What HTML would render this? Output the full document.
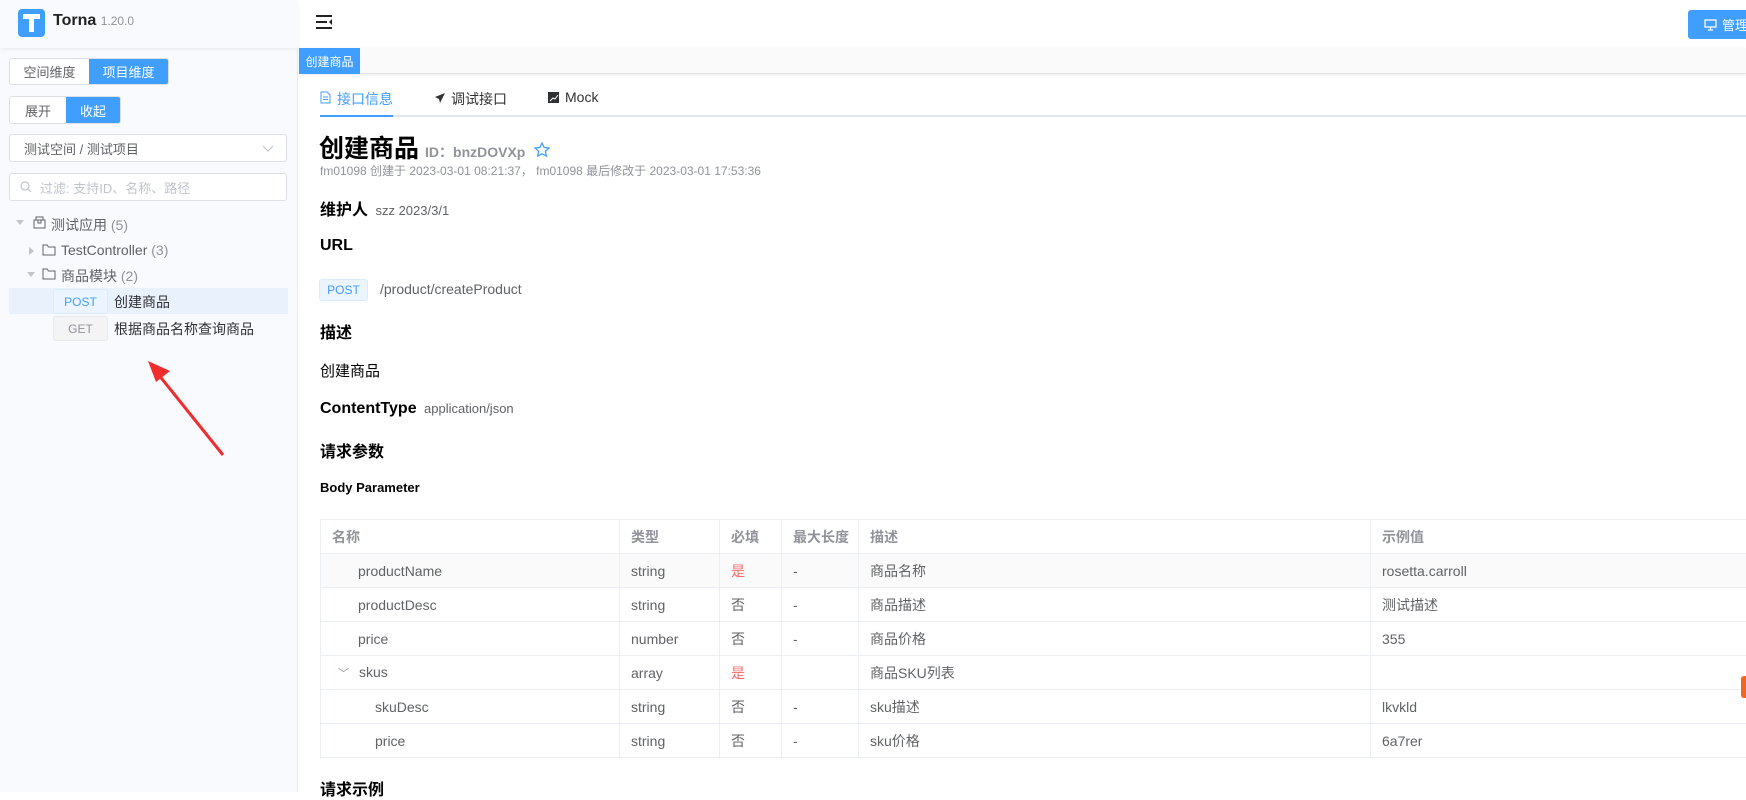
<!DOCTYPE html>
<html><head><meta charset="utf-8"><style>
*{box-sizing:border-box;margin:0;padding:0}
body{width:1746px;height:792px;overflow:hidden;position:relative;background:#fff;font-family:"Liberation Sans","Noto Sans CJK SC",sans-serif;color:#303133}
.abs{position:absolute;white-space:nowrap}
#side{position:absolute;left:0;top:0;width:298px;height:792px;background:#f8fafd;border-right:1px solid #e8ecf2}
#sidehead{position:absolute;left:0;top:0;width:298px;height:48px;background:#f8fafd;box-shadow:0 2px 4px rgba(0,0,0,.05)}
.bg{position:absolute;display:flex;border:1px solid #dcdfe6;border-radius:3px;overflow:hidden;font-size:13px;background:#fff}
.bg div{display:flex;align-items:center;justify-content:center;color:#606266}
.bg .on{background:#409eff;color:#fff}
.inp{position:absolute;left:9px;width:278px;height:28px;border:1px solid #dcdfe6;border-radius:3px;background:#fff;font-size:13px;display:flex;align-items:center}
.tr{font-size:14px;color:#606266}
.tag{position:absolute;height:25px;border-radius:3px;font-size:12px;display:flex;align-items:center;justify-content:center}
.h{font-weight:bold;font-size:16px;color:#000}
table{border-collapse:collapse;position:absolute;left:320px;top:519px;width:1440px;font-size:14px;color:#606266}
td{border:1px solid #ebeef5;height:34px;padding:0 0 0 11px}
tr.hd td{color:#909399;font-weight:bold}
tr.st td{background:#fafafa}
</style></head><body>
<div id="side"></div>
<div id="sidehead"></div>
<div class="abs" style="left:18px;top:9px;width:27px;height:28px;background:#409eff;border-radius:4px"></div>
<div class="abs" style="left:23px;top:14px;width:17px;height:5px;background:#fff"></div>
<div class="abs" style="left:29px;top:14px;width:5px;height:18px;background:#fff"></div>
<div class="abs" style="left:53px;top:12px;font-size:16px;font-weight:bold;color:#222">Torna <span style="font-size:12px;font-weight:normal;color:#909399">1.20.0</span></div>

<div class="bg" style="left:9px;top:58px;width:160px;height:27px"><div style="width:79px">空间维度</div><div class="on" style="flex:1">项目维度</div></div>
<div class="bg" style="left:9px;top:96px;width:112px;height:28px"><div style="width:56px">展开</div><div class="on" style="flex:1">收起</div></div>
<div class="inp" style="top:134px"><span style="margin-left:14px;color:#606266">测试空间 / 测试项目</span><svg style="position:absolute;right:12px;top:10px" width="12" height="8"><path d="M1 1l5 5 5-5" fill="none" stroke="#c0c4cc" stroke-width="1.2"/></svg></div>
<div class="inp" style="top:173px"><svg style="margin-left:10px" width="12" height="12"><circle cx="5" cy="5" r="4" fill="none" stroke="#c0c4cc" stroke-width="1.2"/><path d="M8 8l3 3" stroke="#c0c4cc" stroke-width="1.2"/></svg><span style="margin-left:8px;color:#c0c4cc">过滤: 支持ID、名称、路径</span></div>

<div class="abs" style="left:16px;top:220px;width:0;height:0;border-left:4px solid transparent;border-right:4px solid transparent;border-top:5px solid #c0c4cc"></div>
<svg class="abs" style="left:33px;top:216px" width="13" height="13"><rect x="1" y="4" width="11" height="8" fill="none" stroke="#606266"/><path d="M3 4V1h7v3M5 4v3h3V4" fill="none" stroke="#606266"/></svg>
<div class="abs tr" style="left:51px;top:215px">测试应用 <span style="color:#909399">(5)</span></div>
<div class="abs" style="left:29px;top:247px;width:0;height:0;border-top:4px solid transparent;border-bottom:4px solid transparent;border-left:5px solid #c0c4cc"></div>
<svg class="abs" style="left:42px;top:244px" width="14" height="12"><path d="M1 1h4l1.5 2H13v8H1z" fill="none" stroke="#606266"/></svg>
<div class="abs tr" style="left:61px;top:242px">TestController <span style="color:#909399">(3)</span></div>
<div class="abs" style="left:27px;top:272px;width:0;height:0;border-left:4px solid transparent;border-right:4px solid transparent;border-top:5px solid #c0c4cc"></div>
<svg class="abs" style="left:42px;top:268px" width="14" height="12"><path d="M1 1h4l1.5 2H13v8H1z" fill="none" stroke="#606266"/></svg>
<div class="abs tr" style="left:61px;top:266px">商品模块 <span style="color:#909399">(2)</span></div>
<div class="abs" style="left:9px;top:288px;width:279px;height:26px;background:#e9f1fc"></div>
<div class="tag" style="left:53px;top:289px;width:55px;background:#ecf5ff;border:1px solid #d9ecff;color:#409eff">POST</div>
<div class="abs tr" style="left:114px;top:292px;color:#303133">创建商品</div>
<div class="tag" style="left:53px;top:316px;width:55px;background:#f4f4f5;border:1px solid #e9e9eb;color:#909399">GET</div>
<div class="abs tr" style="left:114px;top:319px;color:#303133">根据商品名称查询商品</div>
<svg class="abs" style="left:140px;top:355px" width="90" height="105"><path d="M83 100L14 14" stroke="#f02c2c" stroke-width="3"/><path d="M8 6l22 10-14 11z" fill="#f02c2c"/></svg>

<!-- header -->
<svg class="abs" style="left:316px;top:15px" width="18" height="14"><path d="M0 1h16M0 7h11M0 13h16" stroke="#222" stroke-width="2"/><path d="M16 4l-3 3 3 3z" fill="#222"/></svg>
<div class="abs" style="left:1688px;top:10px;width:70px;height:29px;background:#409eff;border-radius:3px;color:#fff;font-size:13px;display:flex;align-items:center;padding-left:16px"><svg width="13" height="12"><rect x="1" y="1" width="11" height="7" fill="none" stroke="#fff" stroke-width="1.3"/><path d="M4 11h5M6.5 8v3" stroke="#fff" stroke-width="1.3"/></svg><span style="margin-left:5px">管理</span></div>
<div class="abs" style="left:299px;top:48px;width:1447px;height:26px;background:#fafafa;border-bottom:1px solid #e4e4e4;box-shadow:0 1px 3px rgba(0,0,0,.08)"></div>
<div class="abs" style="left:299px;top:48px;width:61px;height:26px;background:#409eff;color:#fff;font-size:12px;display:flex;align-items:center;justify-content:center">创建商品</div>

<!-- tabs -->
<div class="abs" style="left:320px;top:115px;width:1426px;height:2px;background:#e4e7ed"></div>
<div class="abs" style="left:320px;top:115px;width:73px;height:2px;background:#409eff"></div>
<svg class="abs" style="left:320px;top:91px" width="11" height="13"><path d="M1 1h6l3 3v8H1z M3 6h5M3 8.5h5" fill="none" stroke="#409eff"/></svg>
<div class="abs" style="left:337px;top:89px;font-size:14px;color:#409eff">接口信息</div>
<svg class="abs" style="left:434px;top:92px" width="12" height="12"><path d="M11 1L1 5l4 2 1 4z" fill="#303133"/></svg>
<div class="abs" style="left:451px;top:89px;font-size:14px">调试接口</div>
<svg class="abs" style="left:548px;top:92px" width="11" height="11"><rect width="11" height="11" fill="#303133"/><path d="M2 9l3-3 2 1 3-4" stroke="#fff" fill="none"/></svg>
<div class="abs" style="left:565px;top:89px;font-size:14px">Mock</div>

<div class="abs" style="left:319px;top:129px;font-size:25px;font-weight:bold;color:#000;display:flex;align-items:baseline">创建商品<span style="font-size:14px;color:#909399;margin-left:6px">ID：bnzDOVXp</span><svg style="margin-left:9px;position:relative;top:1px" width="16" height="16"><path d="M8 1l2.1 4.4 4.8.6-3.5 3.3.9 4.8L8 11.8 3.7 14.1l.9-4.8L1.1 6l4.8-.6z" fill="none" stroke="#409eff" stroke-width="1.3"/></svg></div>
<div class="abs" style="left:320px;top:162px;font-size:12px;color:#909399">fm01098 创建于 2023-03-01 08:21:37， fm01098 最后修改于 2023-03-01 17:53:36</div>

<div class="abs h" style="left:320px;top:196px">维护人 <span style="font-size:13px;font-weight:normal;color:#606266;margin-left:3px">szz 2023/3/1</span></div>
<div class="abs h" style="left:320px;top:237px">URL</div>
<div class="tag" style="left:319px;top:279px;width:49px;height:22px;background:#ecf5ff;border:1px solid #d9ecff;color:#409eff">POST</div>
<div class="abs" style="left:380px;top:281px;font-size:14px;color:#606266">/product/createProduct</div>
<div class="abs h" style="left:320px;top:319px">描述</div>
<div class="abs" style="left:320px;top:360px;font-size:15px;color:#000">创建商品</div>
<div class="abs h" style="left:320px;top:400px">ContentType <span style="font-size:13px;font-weight:normal;color:#606266;margin-left:3px">application/json</span></div>
<div class="abs h" style="left:320px;top:438px">请求参数</div>
<div class="abs" style="left:320px;top:480px;font-size:13px;font-weight:bold;color:#000">Body Parameter</div>

<table>
<colgroup><col style="width:299px"><col style="width:100px"><col style="width:62px"><col style="width:77px"><col style="width:512px"><col></colgroup>
<tr class="hd"><td>名称</td><td>类型</td><td>必填</td><td>最大长度</td><td>描述</td><td>示例值</td></tr>
<tr class="st"><td style="padding-left:37px">productName</td><td>string</td><td style="color:#f56c6c">是</td><td>-</td><td>商品名称</td><td>rosetta.carroll</td></tr>
<tr><td style="padding-left:37px">productDesc</td><td>string</td><td>否</td><td>-</td><td>商品描述</td><td>测试描述</td></tr>
<tr><td style="padding-left:37px">price</td><td>number</td><td>否</td><td>-</td><td>商品价格</td><td>355</td></tr>
<tr><td style="padding-left:17px"><span style="color:#909399;font-size:11px;margin-right:10px">﹀</span>skus</td><td>array</td><td style="color:#f56c6c">是</td><td></td><td>商品SKU列表</td><td></td></tr>
<tr><td style="padding-left:54px">skuDesc</td><td>string</td><td>否</td><td>-</td><td>sku描述</td><td>lkvkld</td></tr>
<tr><td style="padding-left:54px">price</td><td>string</td><td>否</td><td>-</td><td>sku价格</td><td>6a7rer</td></tr>
</table>
<div class="abs h" style="left:320px;top:776px">请求示例</div>
<div class="abs" style="left:1741px;top:676px;width:8px;height:22px;background:#f26522;border-radius:3px"></div>
</body></html>
